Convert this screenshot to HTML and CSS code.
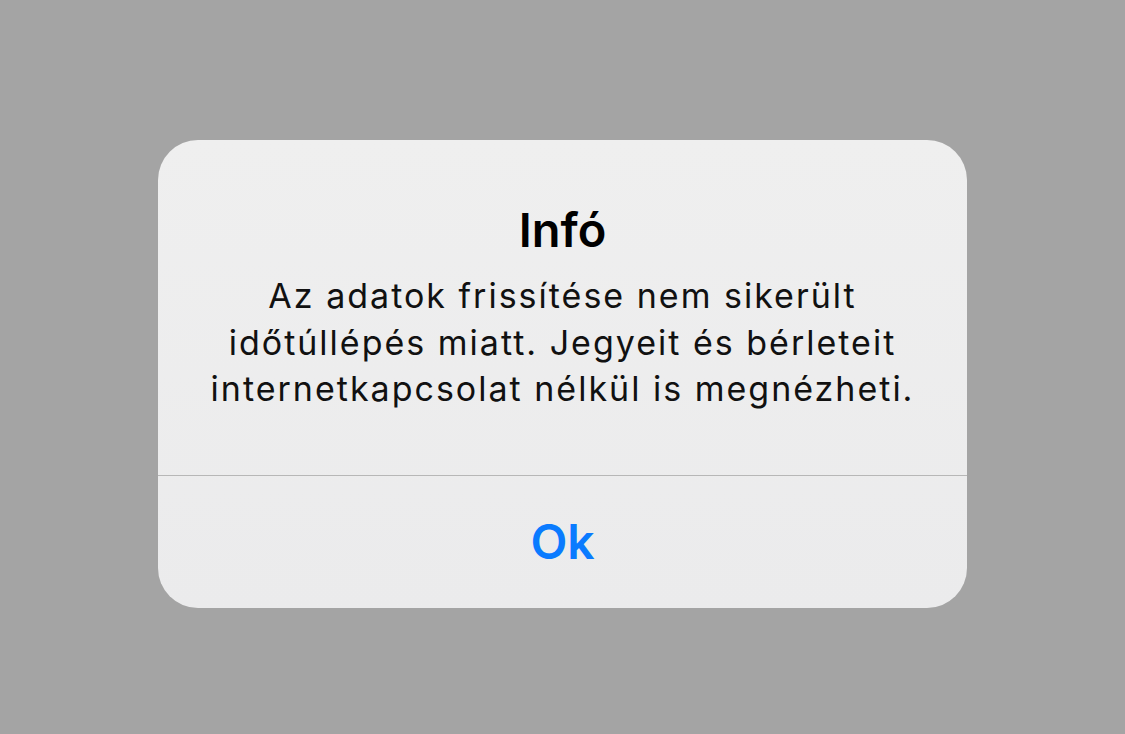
FILE: index.html
```html
<!DOCTYPE html>
<html lang="hu">
<head>
<meta charset="utf-8">
<link rel="stylesheet" href="styles.css">
</head>
<body>
<div class="screen">
  <div class="alert">
    <div class="alert-content">
      <h1 class="alert-title">Infó</h1>
      <p class="alert-message">Az adatok frissítése nem sikerült<br>időtúllépés miatt. Jegyeit és bérleteit<br>internetkapcsolat nélkül is megnézheti.</p>
    </div>
    <div class="alert-actions">
      <button class="alert-button">Ok</button>
    </div>
  </div>
</div>
</body>
</html>
```
FILE: styles.css
```css
html, body {
  margin: 0;
  padding: 0;
  background: #a4a4a4;
}
.screen {
  width: 1125px;
  height: 734px;
  display: flex;
  justify-content: center;
  align-items: flex-start;
  padding-top: 140px;
  box-sizing: border-box;
  font-family: Inter, "Noto Sans", sans-serif;
}
.alert {
  width: 809px;
  height: 468px;
  border-radius: 40px;
  background: linear-gradient(#efefef, #ebebec);
  display: flex;
  flex-direction: column;
  overflow: hidden;
}
.alert-content {
  padding: 62px 10px 0;
  height: 336px;
  box-sizing: border-box;
  border-bottom: 1px solid #b7b7b7;
  text-align: center;
}
.alert-title {
  margin: 0;
  font-size: 47px;
  line-height: 56px;
  font-weight: 600;
  color: #000;
}
.alert-message {
  margin: 15px 0 0;
  font-size: 34px;
  line-height: 46.5px;
  font-weight: 400;
  letter-spacing: 2px;
  color: #111;
}
.alert-actions {
  flex: 1;
  display: flex;
}
.alert-button {
  flex: 1;
  border: none;
  background: transparent;
  font-family: Inter, "Noto Sans", sans-serif;
  font-size: 48px;
  font-weight: 600;
  color: #0a7bff;
  padding: 0 0 2px;
}
```
